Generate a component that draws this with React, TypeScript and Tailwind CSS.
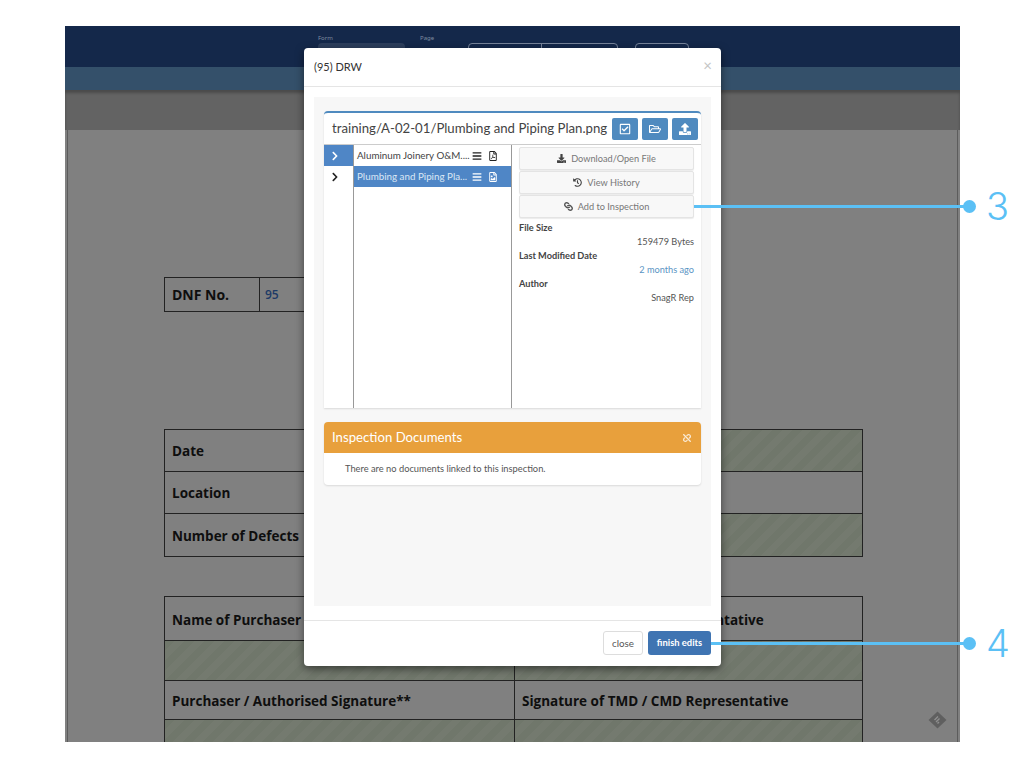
import {
  FaBars,
  FaChevronRight,
  FaDownload,
  FaHistory,
  FaLink,
  FaRegCheckSquare,
  FaRegFileImage,
  FaRegFilePdf,
  FaRegFolderOpen,
  FaUnlink,
  FaUpload,
} from 'react-icons/fa';

const HATCH =
  'bg-[repeating-linear-gradient(135deg,#70776b_0px,#70776b_7px,#747a6f_7px,#747a6f_14px)]';

const SUMMARY_ROWS = [
  { label: 'Date', height: 'h-[42px]', hatched: true },
  { label: 'Location', height: 'h-[42px]', hatched: false },
  { label: 'Number of Defects', height: 'h-[43px]', hatched: true },
];

const FILE_ACTIONS = [
  { label: 'Download/Open File', icon: <FaDownload className="text-[9px] text-[#444]" />, height: 'h-[23px]' },
  { label: 'View History', icon: <FaHistory className="text-[9px] text-[#444]" />, height: 'h-[23px]' },
  { label: 'Add to Inspection', icon: <FaLink className="text-[9px] text-[#555] rotate-90" />, height: 'h-[23px]' },
];

const FILE_META = [
  { label: 'File Size', value: '159479 Bytes', color: 'text-[#555]' },
  { label: 'Last Modified Date', value: '2 months ago', color: 'text-[#5a94c4]' },
  { label: 'Author', value: 'SnagR Rep', color: 'text-[#555]' },
];

function BackgroundPage() {
  return (
    <div className="ml-[65px] mt-[26px] w-[895px] h-[716px] bg-[#808080] flex flex-col overflow-hidden">
      {/* top nav */}
      <div className="h-[41px] bg-[#14284a] flex shrink-0 pl-[253px]">
        <div className="w-[87px] pt-[8px]">
          <div className="text-[6px] leading-[8px] text-[#7f8ca0]">Form</div>
          <div className="h-[10px] mt-[1px] rounded-sm bg-[#2c3e5c]" />
        </div>
        <div className="w-[48px] ml-[15px] pt-[8px] text-[6px] leading-[8px] text-[#7f8ca0]">Page</div>
        <div className="w-[150px] h-[10px] mt-[17px] border border-[#76839a] rounded-sm flex">
          <div className="w-[73px] border-r border-[#76839a]" />
        </div>
        <div className="w-[54px] h-[10px] mt-[17px] ml-[17px] border border-[#76839a] rounded-sm" />
      </div>
      <div className="h-[23px] bg-[#34506a] shrink-0" />
      <div className="h-[40px] bg-[#636363] shrink-0 shadow-[inset_0_3px_3px_rgba(0,0,0,0.25)]" />

      {/* form sheet */}
      <div
        className="flex-1 mx-[2px] border-x border-[#5c5c5c] bg-[#808080] pl-[96px] pr-[94px] pt-[147px] text-[#0e0e0e] font-bold text-[13.5px]"
        style={{ fontFamily: '"Open Sans", sans-serif' }}
      >
        <div className="flex w-[300px] h-[35px] border border-[#222]">
          <div className="w-[95px] border-r border-[#222] flex items-center pl-[7px] text-[14px]">DNF No.</div>
          <div className="flex items-center pl-[5px] text-[#1d3a66] text-[12px] font-semibold">95</div>
        </div>

        <div className="mt-[117px] border border-[#222] border-b-0">
          {SUMMARY_ROWS.map((row) => (
            <div key={row.label} className={`grid grid-cols-[350px_1fr] ${row.height} border-b border-[#222]`}>
              <div className="flex items-center pl-[7px] pt-[2px]">{row.label}</div>
              <div className={row.hatched ? HATCH : ''} />
            </div>
          ))}
        </div>

        <div className="mt-[39px] border border-[#222] border-b-0 grid grid-cols-[350px_1fr]">
          <div className="h-[44px] flex items-center pl-[7px] pt-[3px] border-b border-r border-[#222]">Name of Purchaser</div>
          <div className="h-[44px] flex items-center pl-[7px] pt-[3px] border-b border-[#222]">Name of TMD / CMD Representative</div>
          <div className={`h-[40px] border-b border-r border-[#222] ${HATCH}`} />
          <div className={`h-[40px] border-b border-[#222] ${HATCH}`} />
          <div className="h-[39px] flex items-center pl-[7px] pt-[2px] border-b border-r border-[#222]">Purchaser / Authorised Signature**</div>
          <div className="h-[39px] flex items-center pl-[7px] pt-[2px] border-b border-[#222]">Signature of TMD / CMD Representative</div>
          <div className={`h-[24px] border-r border-[#222] ${HATCH}`} />
          <div className={`h-[24px] ${HATCH}`} />
        </div>
      </div>
    </div>
  );
}

function DocumentBrowser() {
  return (
    <div className="bg-white border-t-2 border-[#4f8abf] rounded-t-sm shadow-[0_1px_2px_rgba(0,0,0,0.12)] h-[297px] flex flex-col">
      <div className="h-[32px] flex items-center justify-between pl-[8px] pr-[3px] border-b border-[#ccc] shrink-0">
        <span className="text-[13.2px] text-[#444] whitespace-nowrap">training/A-02-01/Plumbing and Piping Plan.png</span>
        <div className="flex gap-[4px]">
          <button className="w-[26px] h-[22px] rounded-[2px] bg-[#4f8abf] text-white flex items-center justify-center text-[12px]"><FaRegCheckSquare /></button>
          <button className="w-[26px] h-[22px] rounded-[2px] bg-[#4f8abf] text-white flex items-center justify-center text-[12px]"><FaRegFolderOpen /></button>
          <button className="w-[26px] h-[22px] rounded-[2px] bg-[#4f8abf] text-white flex items-center justify-center text-[12px]"><FaUpload /></button>
        </div>
      </div>
      <div className="flex flex-1 min-h-0">
        <div className="w-[30px] border-r border-[#999] shrink-0 text-[10px]">
          <div className="h-[21px] bg-[#4f86c6] text-white flex items-center pl-[6px]"><FaChevronRight /></div>
          <div className="h-[21px] text-[#222] flex items-center pl-[6px]"><FaChevronRight /></div>
        </div>
        <div className="w-[158px] border-r border-[#999] shrink-0 text-[9.8px]">
          <div className="h-[21px] flex items-center pl-[3px] text-[#444]">
            <span className="w-[115px] whitespace-nowrap">Aluminum Joinery O&amp;M....</span>
            <FaBars className="text-[10px] text-[#222]" />
            <FaRegFilePdf className="text-[10px] text-[#222] ml-[6px]" />
          </div>
          <div className="h-[21px] flex items-center pl-[3px] bg-[#4f86c6] text-[#dbe7f5]">
            <span className="w-[115px] whitespace-nowrap">Plumbing and Piping Pla...</span>
            <FaBars className="text-[10px] text-white" />
            <FaRegFileImage className="text-[10px] text-white ml-[6px]" />
          </div>
        </div>
        <div className="flex-1 pl-[7px] pr-[7px] pt-[2px] text-[9.2px]">
          <div className="flex flex-col gap-[1px]">
            {FILE_ACTIONS.map((action) => (
              <button
                key={action.label}
                className={`${action.height} rounded-[2px] bg-[#f8f8f8] border border-[#e4e4e4] shadow-[0_1px_1px_rgba(0,0,0,0.08)] flex items-center justify-center gap-[5px] text-[#777]`}
              >
                {action.icon}
                {action.label}
              </button>
            ))}
          </div>
          <div className="mt-[3px] text-[#555]">
            {FILE_META.map((item) => (
              <div key={item.label} className="h-[28px]">
                <div className="h-[14px] leading-[14px] font-bold text-[#444]">{item.label}</div>
                <div className={`h-[14px] leading-[14px] text-right ${item.color}`}>{item.value}</div>
              </div>
            ))}
          </div>
        </div>
      </div>
    </div>
  );
}

function Modal() {
  return (
    <div
      className="absolute left-[304px] top-[48px] w-[417px] h-[618px] bg-white rounded-[4px] shadow-[0_3px_9px_rgba(0,0,0,0.5)] flex flex-col"
      style={{ fontFamily: 'Lato, sans-serif' }}
    >
      <div className="h-[39px] border-b border-[#e5e5e5] flex items-center justify-between pl-[10px] pr-[9px] shrink-0">
        <span className="text-[11px] text-[#333]">(95) DRW</span>
        <span className="text-[15px] leading-none text-[#c4c4c4] -mt-[3px]">×</span>
      </div>
      <div className="mx-[10px] mt-[10px] h-[509px] bg-[#f7f7f7] px-[10px] pt-[14px]">
        <DocumentBrowser />
        <div className="mt-[14px] bg-white rounded-sm shadow-[0_1px_2px_rgba(0,0,0,0.12)]">
          <div className="h-[31px] bg-[#e8a03c] rounded-t-sm flex items-center justify-between pl-[8px] pr-[10px] text-white">
            <span className="text-[13.2px]">Inspection Documents</span>
            <FaUnlink className="text-[8px] opacity-80" />
          </div>
          <div className="h-[32px] flex items-center pl-[21px] text-[9.3px] text-[#555]">
            There are no documents linked to this inspection.
          </div>
        </div>
      </div>
      <div className="mt-[14px] border-t border-[#e5e5e5] flex-1 flex justify-end items-start gap-[5px] pt-[10px] pr-[10px]">
        <button className="w-[40px] h-[24px] rounded-[3px] bg-white border border-[#ddd] text-[9.8px] text-[#555]">close</button>
        <button className="w-[63px] h-[24px] rounded-[3px] bg-[#3f74b2] text-[9.4px] font-bold text-white">finish edits</button>
      </div>
    </div>
  );
}

function Callout({ top, left, number }: { top: string; left: string; number: string }) {
  return (
    <div className={`absolute ${top} ${left} right-[18px] flex items-center h-[40px]`}>
      <div className="flex-1 h-[3px] bg-[#5bc0f5]" />
      <div className="w-[13px] h-[13px] rounded-full bg-[#5bc0f5] -ml-[2px]" />
      <span
        className="ml-[10px] w-[20px] text-[38px] leading-[40px] font-light text-[#5bc0f5]"
        style={{ fontFamily: 'Inter, sans-serif' }}
      >
        {number}
      </span>
    </div>
  );
}

export default function App() {
  return (
    <div className="relative w-[1024px] h-[768px] overflow-hidden bg-white">
      <BackgroundPage />
      {/* small feedback badge, bottom right of the sheet */}
      <svg className="absolute left-[928px] top-[711px]" width="19" height="18" viewBox="0 0 19 18">
        <path d="M9.5 0.5 18.5 9 9.5 17.5 0.5 9Z" fill="#5f5f5f" />
        <path d="M6.5 9 10 5.5M8 11 11.5 7.5M9.5 12.5 11 11" stroke="#8f8f8f" strokeWidth="1.4" />
      </svg>
      <Modal />
      <Callout top="top-[186px]" left="left-[694px]" number="3" />
      <Callout top="top-[623px]" left="left-[711px]" number="4" />
    </div>
  );
}
